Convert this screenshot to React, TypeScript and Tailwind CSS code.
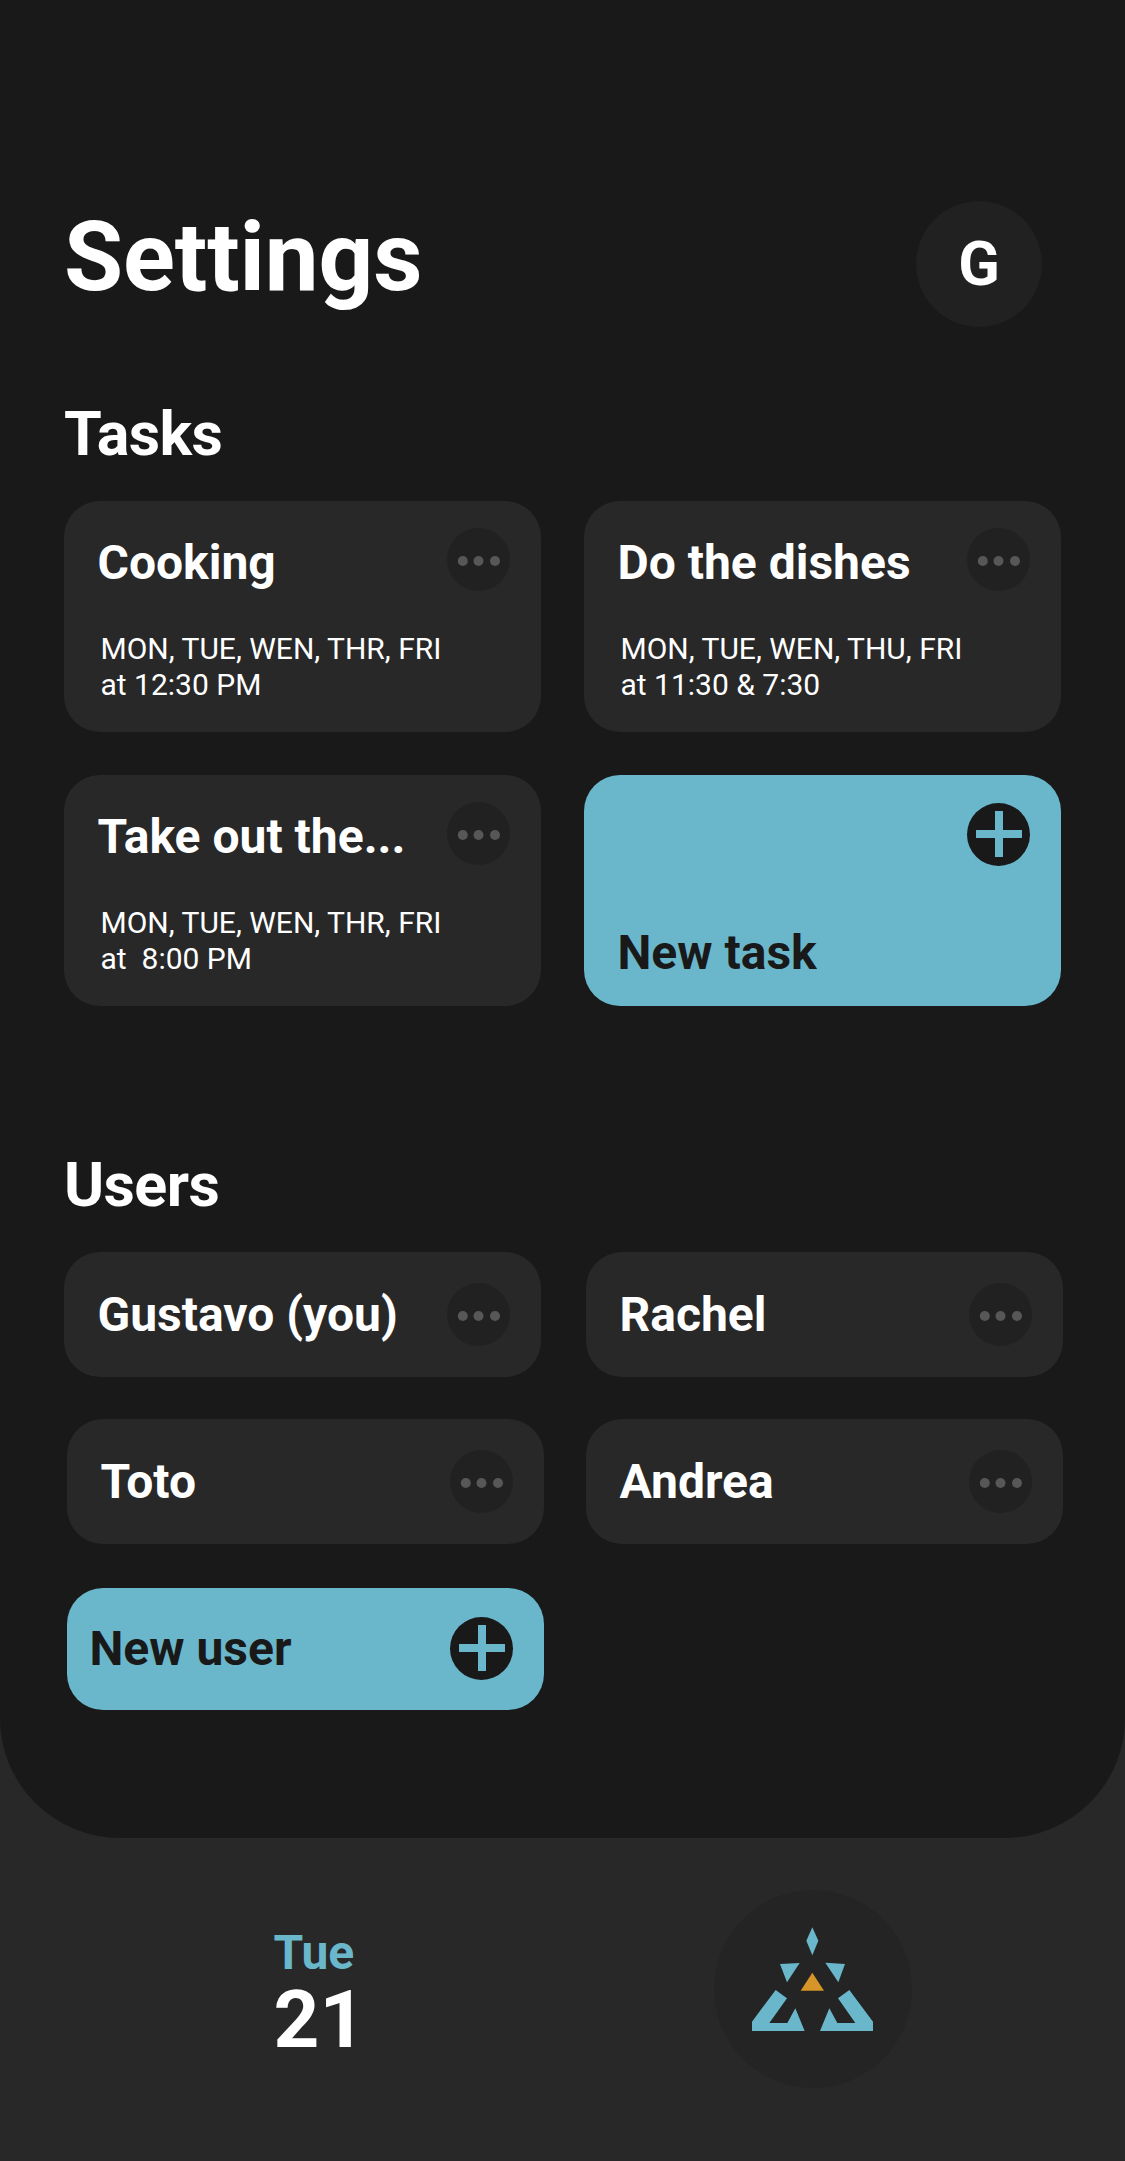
import React from "react";

type Task = { title: string; days: string; time: string };

const tasks: Task[] = [
  { title: "Cooking", days: "MON, TUE, WEN, THR, FRI", time: "at 12:30 PM" },
  { title: "Do the dishes", days: "MON, TUE, WEN, THU, FRI", time: "at 11:30 & 7:30" },
  { title: "Take out the...", days: "MON, TUE, WEN, THR, FRI", time: "at  8:00 PM" },
];

function MoreButton() {
  return (
    <button aria-label="More options" className="size-[63px] shrink-0 rounded-full bg-[#212121]">
      <svg viewBox="0 0 63 63" className="size-full fill-[#575757]">
        <circle cx="15.8" cy="33" r="5" />
        <circle cx="31.5" cy="33" r="5" />
        <circle cx="48" cy="33" r="5" />
      </svg>
    </button>
  );
}

function PlusIcon() {
  return (
    <span className="size-[63px] shrink-0 rounded-full bg-[#191919]">
      <svg viewBox="0 0 63 63" className="size-full fill-[#6ab7cc]">
        <path d="M28 8h8v19h19v8H36v19h-8V35H9v-8h19z" />
      </svg>
    </span>
  );
}

function TaskCard({ title, days, time }: Task) {
  return (
    <article className="flex h-[231px] w-[477px] items-start justify-between rounded-[36px] bg-[#282828] pt-[27px] pr-[31px] pl-[33.5px]">
      <div className="w-[345px] pt-[11px] whitespace-pre">
        <h3 className="h-12 text-[48px] leading-none font-bold">{title}</h3>
        <p className="mt-[44px] ml-[3px] text-[30px] leading-[36px]">
          {days}
          <br />
          {time}
        </p>
      </div>
      <MoreButton />
    </article>
  );
}

function UserCard({ name }: { name: string }) {
  return (
    <article className="flex h-[125px] w-[477px] items-center justify-between rounded-[36px] bg-[#282828] pr-[31px] pl-[33.5px]">
      <h3 className="text-[48px] leading-none font-bold whitespace-nowrap">{name}</h3>
      <MoreButton />
    </article>
  );
}

function Logo() {
  return (
    <svg viewBox="0 0 198 198" className="size-[198px]">
      <g transform="translate(-24 -30) scale(0.33333)">
        <g fill="#6ab7cc">
          <path d="M367 202l18 40-18 44-18-44z" />
          <path d="M270 312l59-3-38 58z" />
          <path d="M465 312l-59-4 39 59z" />
          <path d="M257 390l34 25-53 74h54l24-44 28 68H186v-28z" />
          <path d="M478 390l-34 25 52 74h-54l-24-44-28 68h159v-28z" />
        </g>
        <path d="M367 338l35 54h-70z" fill="#d69529" />
      </g>
    </svg>
  );
}

export default function App() {
  return (
    <div className="flex h-[2161px] w-[1125px] flex-col bg-[#282828] font-['Roboto',sans-serif] text-white">
      <main className="h-[1838px] rounded-b-[120px] bg-[#191919] pt-[201px] pl-16">
        <header className="flex h-[126px] items-start justify-between pr-[83px]">
          <h1 className="pt-2 text-[96px] leading-none font-bold tracking-[-0.1px]">Settings</h1>
          <div className="flex size-[126px] items-center justify-center rounded-full bg-[#212121] text-[61px] leading-none font-bold">
            G
          </div>
        </header>

        <section className="mt-[77px]">
          <h2 className="h-[60px] text-[61px] leading-[60px] font-bold tracking-[-0.6px]">Tasks</h2>
          <div className="mt-[37px] grid grid-cols-[477px_477px] gap-[43px]">
            {tasks.map((t) => (
              <TaskCard key={t.title} {...t} />
            ))}
            <button className="flex h-[231px] w-[477px] items-start justify-between rounded-[36px] bg-[#6ab7cc] pt-7 pr-[31px] pl-[33.5px] text-[#191919]">
              <span className="mt-[126px] text-[48px] leading-none font-bold">New task</span>
              <PlusIcon />
            </button>
          </div>
        </section>

        <section className="mt-[149px]">
          <h2 className="h-[60px] text-[61px] leading-[60px] font-bold tracking-[-0.6px]">Users</h2>
          <div className="mt-[37px] flex">
            <UserCard name="Gustavo (you)" />
            <div className="ml-[45px]">
              <UserCard name="Rachel" />
            </div>
          </div>
          <div className="mt-[42px] ml-[3px] flex gap-[42px]">
            <UserCard name="Toto" />
            <UserCard name="Andrea" />
          </div>
          <button className="mt-11 ml-[3px] flex h-[122px] w-[477px] items-start justify-between rounded-[36px] bg-[#6ab7cc] pt-[29px] pr-[31px] pl-[22.5px] text-[#191919]">
            <span className="mt-2 text-[48px] leading-none font-bold">New user</span>
            <PlusIcon />
          </button>
        </section>
      </main>

      <footer className="flex grow items-start justify-between pt-[52px] pr-[213px] pl-[273.5px]">
        <div className="pt-[39px] font-bold">
          <p className="text-[48px] leading-none text-[#6ab7cc]">Tue</p>
          <p className="mt-[3px] text-[80px] leading-none">21</p>
        </div>
        <button aria-label="Home" className="size-[198px] rounded-full bg-[#242424]">
          <Logo />
        </button>
      </footer>
    </div>
  );
}
